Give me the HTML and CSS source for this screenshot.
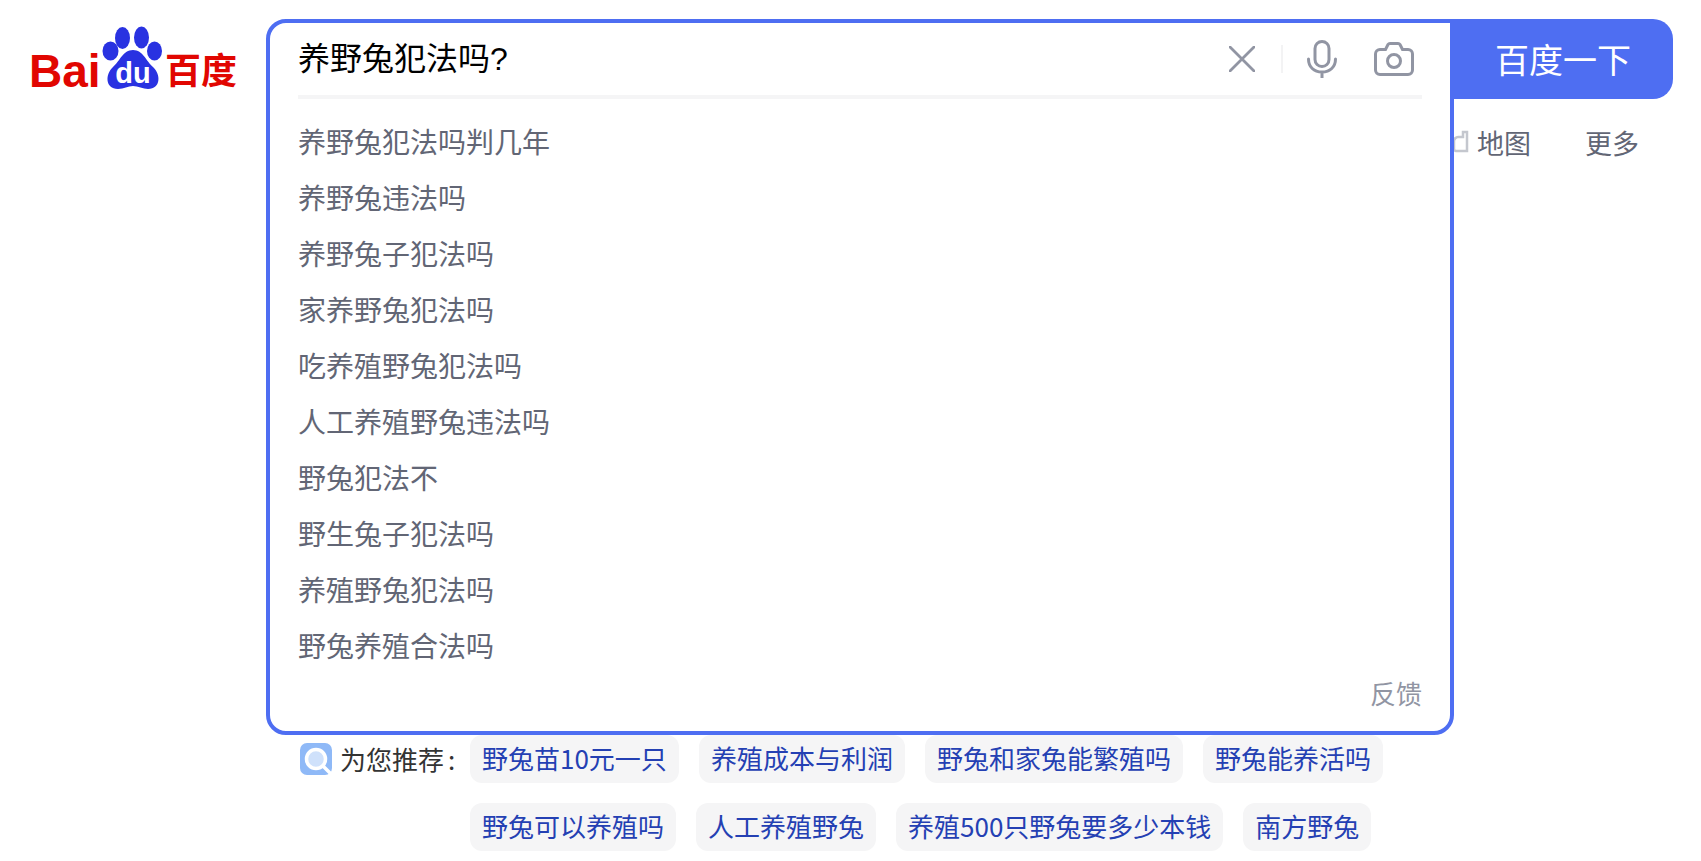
FILE: index.html
```html
<!DOCTYPE html>
<html lang="zh-CN">
<head>
<meta charset="utf-8">
<title>养野兔犯法吗?</title>
<link rel="stylesheet" href="styles.css">
</head>
<body>
<main class="page">
  <a class="logo" aria-label="百度">
    <svg class="logo-svg" viewBox="0 0 266 100" width="266" height="100">
      <text class="logo-bai" x="29" y="87">Bai</text>
      <ellipse class="paw" cx="122.500" cy="38" rx="7.500" ry="11"/>
      <ellipse class="paw" cx="141.500" cy="37.500" rx="7.500" ry="11"/>
      <ellipse class="paw" cx="110.500" cy="51" rx="8" ry="9.500"/>
      <ellipse class="paw" cx="154.500" cy="51" rx="7.500" ry="9.500"/>
      <path class="paw" d="M133 50C123 50 120 61 113 67C105 74 105 89 118 89C124 89 128 86 133 86C138 86 143 89 148 89C161 89 161 74 153 67C146 61 143 50 133 50Z"/>
      <text class="logo-du" x="133" y="83">du</text>
      <text class="logo-cn" x="165" y="84">百度</text>
    </svg>
  </a>
  <section class="search">
    <div class="search-row">
      <div class="box">
        <div class="input-row">
          <span class="query">养野兔犯法吗?</span>
          <span class="tools">
            <svg class="icon icon-x" viewBox="0 0 26 26" width="26" height="26"><path d="M1 1L25 25M25 1L1 25"/></svg>
            <span class="sep"></span>
            <svg class="icon icon-mic" viewBox="0 0 30 38" width="30" height="38"><rect x="8" y="1.500" width="14" height="25" rx="7"/><path d="M1.500 19C1.500 27 7 32 15 32S28.500 27 28.500 19M15 32V38"/></svg>
            <svg class="icon icon-cam" viewBox="0 0 40 34" width="40" height="34"><path d="M6 7.500H11.500L14 2.500C14.500 1.700 15 1.500 16 1.500H24C25 1.500 25.500 1.700 26 2.500L28.500 7.500H34C36.500 7.500 38.500 9.500 38.500 12V28C38.500 30.500 36.500 32.500 34 32.500H6C3.500 32.500 1.500 30.500 1.500 28V12C1.500 9.500 3.500 7.500 6 7.500Z"/><circle cx="20" cy="19" r="6.500"/></svg>
          </span>
        </div>
        <ul class="suggestions">
          <li>养野兔犯法吗判几年</li>
          <li>养野兔违法吗</li>
          <li>养野兔子犯法吗</li>
          <li>家养野兔犯法吗</li>
          <li>吃养殖野兔犯法吗</li>
          <li>人工养殖野兔违法吗</li>
          <li>野兔犯法不</li>
          <li>野生兔子犯法吗</li>
          <li>养殖野兔犯法吗</li>
          <li>野兔养殖合法吗</li>
        </ul>
        <div class="feedback">反馈</div>
      </div>
      <div class="side">
        <button class="submit">百度一下</button>
        <nav class="nav">
          <a class="nav-link nav-map"><svg class="nav-icon" viewBox="0 0 20 26" width="20" height="26"><path d="M5 8H10V3H14V22H3C2 22 1 21 1 20V12C1 10 3 8 5 8Z"/></svg>地图</a>
          <a class="nav-link">更多</a>
        </nav>
      </div>
    </div>
    <div class="recommend">
      <div class="rec-label">
        <svg class="rec-icon" viewBox="0 0 32 32" width="32" height="32"><rect width="32" height="32" rx="7"/><circle cx="16" cy="16" r="9.500"/><path d="M23 23L30 30"/></svg>
        <span class="rec-text">为您推荐<span class="rec-colon">:</span></span>
      </div>
      <div class="tag-rows">
        <div class="tag-row">
          <a class="tag">野兔苗10元一只</a>
          <a class="tag">养殖成本与利润</a>
          <a class="tag">野兔和家兔能繁殖吗</a>
          <a class="tag">野兔能养活吗</a>
        </div>
        <div class="tag-row">
          <a class="tag">野兔可以养殖吗</a>
          <a class="tag">人工养殖野兔</a>
          <a class="tag">养殖500只野兔要多少本钱</a>
          <a class="tag">南方野兔</a>
        </div>
      </div>
    </div>
  </section>
</main>
</body>
</html>
```
FILE: styles.css
```css
* { box-sizing: border-box; }
html, body { margin: 0; padding: 0; background: #fff; overflow: hidden; }
body { font-family: "Noto Sans CJK SC", "Liberation Sans", sans-serif; }

.page { display: flex; width: 1701px; height: 861px; }
.logo { display: block; flex: 0 0 266px; height: 100px; }
.logo-svg { display: block; }
.logo-bai { font-family: "Liberation Sans", sans-serif; font-weight: 700; font-size: 46px; fill: #e10601; }
.logo-cn { font-family: "Noto Sans CJK SC", sans-serif; font-weight: 700; font-size: 36px; fill: #e10601; }
.logo-du { font-family: "Liberation Sans", sans-serif; font-weight: 700; font-size: 29px; fill: #fff; text-anchor: middle; }
.paw { fill: #2932e1; }

.search { flex: 1; padding-top: 19px; }
.search-row { display: flex; align-items: flex-start; }

.box {
  position: relative;
  z-index: 2;
  width: 1188px;
  height: 716px;
  padding: 0 28px;
  border: 4px solid #4e6ef2;
  border-radius: 20px 0 20px 20px;
  background: #fff;
}
.input-row {
  display: flex;
  align-items: center;
  justify-content: space-between;
  height: 76px;
  border-bottom: 4px solid #f5f5f6;
}
.query { font-family: "Liberation Sans", "Noto Sans CJK SC", sans-serif; font-size: 32px; line-height: 72px; color: #000; }
.tools { display: flex; align-items: center; margin-right: 8px; margin-top: -1px; }
.icon { display: block; fill: none; stroke: #9195a3; stroke-width: 3; stroke-linecap: round; }
.icon-x { margin-right: 26px; stroke-width: 2.800; }
.sep { width: 2px; height: 28px; margin-right: 24px; background: #f3f3f4; }
.icon-mic { margin-right: 37px; }

.suggestions { margin: 14px 0 0; padding: 0; list-style: none; }
.suggestions li { height: 56px; font-size: 28px; line-height: 56px; color: #626675; }
.feedback { height: 40px; font-size: 26px; line-height: 40px; text-align: right; color: #9195a3; }

.side { flex: 0 0 220px; margin-left: -1px; }
.submit {
  display: block;
  width: 220px;
  height: 80px;
  padding: 0 0 2px;
  border: 0;
  border-radius: 0 20px 20px 0;
  background: #4e6ef2;
  color: #fff;
  font: 400 34px "Noto Sans CJK SC", sans-serif;
}
.nav { display: flex; justify-content: flex-end; gap: 53px; padding: 19px 42px 0 0; height: 48px; }
.nav-link { display: flex; align-items: center; height: 48px; font-size: 27px; color: #626675; white-space: nowrap; }
.nav-map { margin-right: 1px; }
.nav-icon { margin-right: 4px; fill: none; stroke: #c4c7ce; stroke-width: 2.500; }

.recommend { display: flex; padding-left: 34px; }
.rec-label { display: flex; align-items: center; flex: 0 0 170px; height: 46px; font-size: 26px; color: #333; }
.rec-text { margin-left: 8px; white-space: nowrap; }
.rec-colon { margin-left: 4px; }
.rec-icon { display: block; flex: none; margin-top: 2px; }
.rec-icon rect { fill: #8fb9f7; }
.rec-icon circle { fill: #cfe1fb; stroke: #fff; stroke-width: 3.500; }
.rec-icon path { stroke: #fff; stroke-width: 3.500; stroke-linecap: round; }

.tag-rows { display: flex; flex-direction: column; gap: 20px; }
.tag-row { display: flex; gap: 20px; }
.tag {
  height: 48px;
  padding: 0 12px;
  border-radius: 12px;
  background: #f5f5f6;
  font-size: 26px;
  line-height: 45px;
  color: #2440b3;
  white-space: nowrap;
}
```
